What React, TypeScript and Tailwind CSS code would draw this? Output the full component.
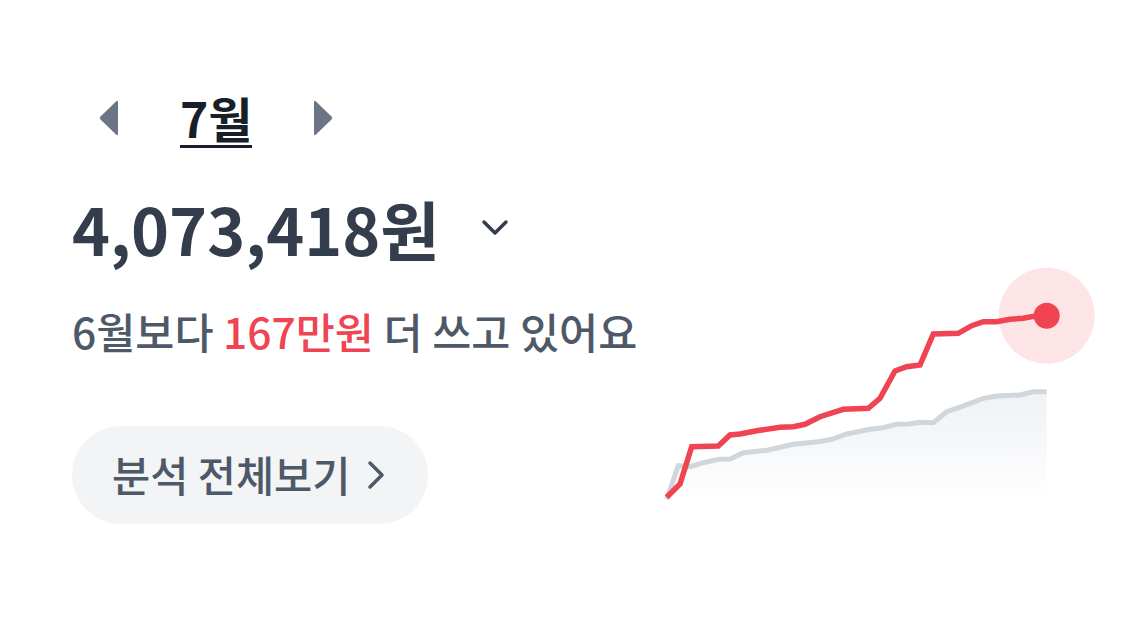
const RED = [
  [16.7, 237.3], [30, 224], [41.7, 186.7], [68.3, 186], [80, 175], [90, 174], [106.7, 170.7],
  [130, 167.3], [143.3, 166.7], [155, 164.3], [170, 156.7], [193.3, 149.3], [218.3, 148.3],
  [230, 138.3], [245, 111], [256.7, 106.7], [270, 105], [283.3, 74], [308.3, 73.3], [321.7, 65.7],
  [333.3, 61.7], [346.7, 61.7], [360, 59.3], [373.3, 58.3], [386.7, 55.7], [396.7, 55.7],
]

const GRAY = [
  [16.7, 239.3], [28.3, 205.7], [40, 206.7], [53.3, 202.7], [68.3, 199.3], [80, 199], [93.3, 192.7],
  [118.3, 190], [143.3, 184.3], [168.3, 181.7], [181.7, 179.3], [196.7, 174], [220, 169.3],
  [233.3, 167.7], [246.7, 164.3], [258.3, 164], [270, 162.3], [283.3, 162.7], [296.7, 151.7],
  [311.7, 146.7], [333.3, 138.3], [346.7, 136], [370, 135], [383.3, 131.7], [396.7, 131.7],
]

const pts = (p: number[][]) => p.map(([x, y]) => `${x},${y}`).join(' ')

function Chart() {
  const area = `M${GRAY.map(([x, y]) => `${x},${y}`).join(' L')} L396.7,240 L16.7,240 Z`
  return (
    <svg width="450" height="250" viewBox="0 0 450 250" className="shrink-0">
      <defs>
        <linearGradient id="fade" x1="0" y1="0" x2="0" y2="1">
          <stop offset="0" stopColor="#eef0f3" stopOpacity="0.9" />
          <stop offset="1" stopColor="#ffffff" stopOpacity="1" />
        </linearGradient>
      </defs>
      <path d={area} fill="url(#fade)" />
      <polyline points={pts(GRAY)} fill="none" stroke="#d1d6db" strokeWidth="5" />
      <circle cx="396.7" cy="55.7" r="48" fill="#fde5e7" />
      <polyline points={pts(RED)} fill="none" stroke="#f04452" strokeWidth="5.5" />
      <circle cx="396.7" cy="55.7" r="13" fill="#f04452" />
    </svg>
  )
}

export default function App() {
  return (
    <div className="w-[1125px] h-[617px] bg-white flex overflow-hidden" style={{ fontFamily: '"Noto Sans CJK KR", "Noto Sans", sans-serif' }}>
      <div className="pl-[72px] pt-[91px] w-[578px] shrink-0">
        {/* 월 선택 */}
        <div className="flex items-center h-[57px]">
          <svg width="22" height="36" viewBox="0 0 22 36" className="ml-[26px] mb-[4px]">
            <path d="M20 2 L20 34 Q20 36 18 34.5 L2.5 19.5 Q1 18 2.5 16.5 L18 1.5 Q20 0 20 2 Z" fill="#6b7684" />
          </svg>
          <span className="ml-[60px] text-[48px] font-bold leading-none text-[#191f28] border-b-[3px] border-[#191f28] pt-[2px] pb-[4px]">7월</span>
          <svg width="22" height="36" viewBox="0 0 22 36" className="ml-[60px] mb-[4px]">
            <path d="M2 2 L2 34 Q2 36 4 34.5 L19.5 19.5 Q21 18 19.5 16.5 L4 1.5 Q2 0 2 2 Z" fill="#6b7684" />
          </svg>
        </div>

        {/* 금액 */}
        <div className="flex items-center mt-[48px] h-[64px]">
          <span className="text-[64.5px] font-bold leading-none text-[#333d4b] whitespace-nowrap">4,073,418원</span>
          <svg width="30" height="20" viewBox="0 0 30 20" className="ml-[40px]">
            <path d="M4 4 L15 15 L26 4" fill="none" stroke="#333d4b" strokeWidth="3.5" strokeLinecap="round" strokeLinejoin="round" />
          </svg>
        </div>

        <p className="mt-[50px] text-[42.5px] font-medium leading-none text-[#4e5968] whitespace-nowrap">
          6월보다 <span className="text-[#f04452]">167만원</span> 더 쓰고 있어요
        </p>

        <button className="mt-[73px] h-[98px] pl-[40px] pr-[42px] rounded-full bg-[#f2f4f6] flex items-center gap-[16px] text-[41.5px] font-medium leading-none text-[#4e5968] whitespace-nowrap">
          분석 전체보기
          <svg width="20" height="32" viewBox="0 0 20 32">
            <path d="M4 4 L16 16 L4 28" fill="none" stroke="#4e5968" strokeWidth="3.5" strokeLinecap="round" strokeLinejoin="round" />
          </svg>
        </button>
      </div>

      <div className="ml-[72px] mt-[260px]">
        <Chart />
      </div>
    </div>
  )
}
